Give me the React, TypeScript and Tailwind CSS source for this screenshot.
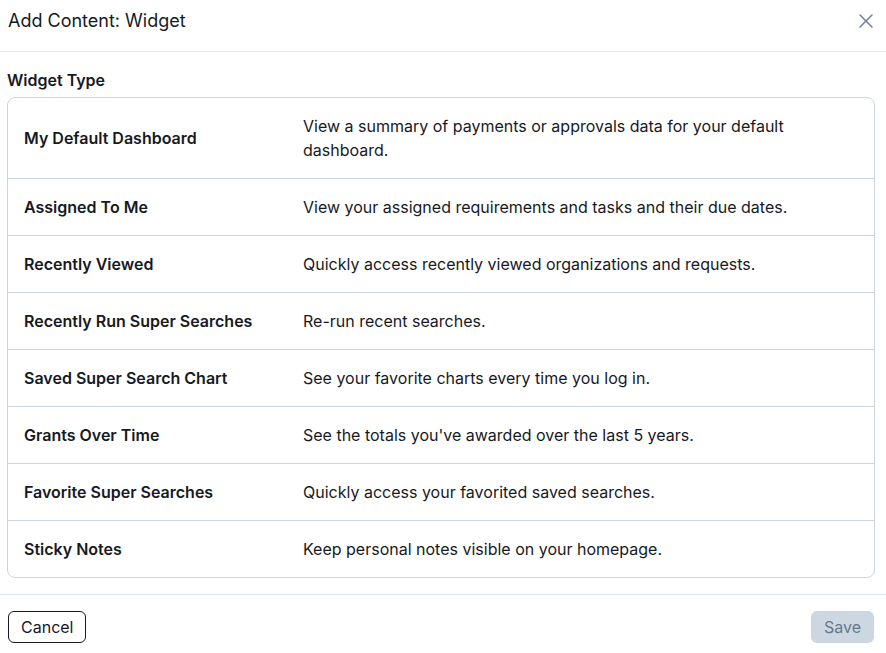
import { X } from 'lucide-react';

const widgets = [
  {
    name: 'My Default Dashboard',
    description: 'View a summary of payments or approvals data for your default dashboard.',
  },
  { name: 'Assigned To Me', description: 'View your assigned requirements and tasks and their due dates.' },
  { name: 'Recently Viewed', description: 'Quickly access recently viewed organizations and requests.' },
  { name: 'Recently Run Super Searches', description: 'Re-run recent searches.' },
  { name: 'Saved Super Search Chart', description: 'See your favorite charts every time you log in.' },
  { name: 'Grants Over Time', description: "See the totals you've awarded over the last 5 years." },
  { name: 'Favorite Super Searches', description: 'Quickly access your favorited saved searches.' },
  { name: 'Sticky Notes', description: 'Keep personal notes visible on your homepage.' },
];

export default function App() {
  return (
    <div className="w-[886px] h-[653px] bg-white text-[#171923] font-['Inter',sans-serif] overflow-hidden">
      {/* Header */}
      <div className="h-[52px] flex items-start justify-between pl-2 pr-[8px] pt-[7px] border-b border-[#e2e8f0]">
        <h1 className="text-[18px] leading-7 font-normal">Add Content: Widget</h1>
        <button className="text-[#718096] mt-[2px]">
          <X size={24} strokeWidth={1.5} />
        </button>
      </div>

      {/* Body */}
      <div className="pl-[7px] pr-[11px] pt-4 pb-4 border-b border-[#e2e8f0]">
        <div className="text-base leading-6 font-semibold mb-[5px]">Widget Type</div>
        <div className="border border-[#cbd5e0] rounded-lg">
          {widgets.map((w, i) => (
            <div
              key={w.name}
              className={`grid grid-cols-[279px_1fr] ${i > 0 ? 'border-t border-[#cbd5e0]' : ''}`}
            >
              <div className="px-4 py-4 flex items-center text-base leading-6 font-semibold">{w.name}</div>
              <div className="px-4 py-4 text-base leading-6">{w.description}</div>
            </div>
          ))}
        </div>
      </div>

      {/* Footer */}
      <div className="flex items-center justify-between pl-2 pr-3 pt-4">
        <button className="h-8 px-3 border border-[#171923] rounded-md text-base">Cancel</button>
        <button className="h-8 px-[13px] rounded-md bg-[#cdd7e2] text-[#66788c] text-base">Save</button>
      </div>
    </div>
  );
}
